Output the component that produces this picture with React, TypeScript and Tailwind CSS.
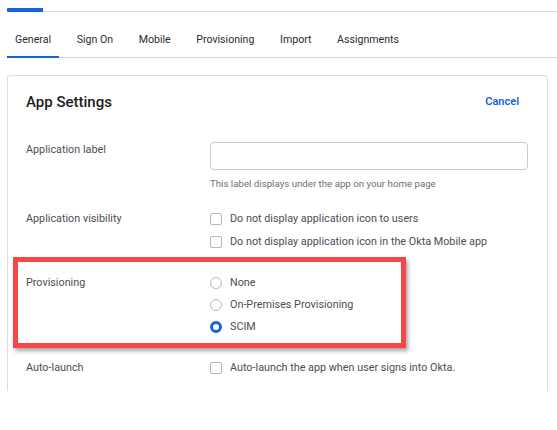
import { ReactNode } from 'react';

const tabs = ['General', 'Sign On', 'Mobile', 'Provisioning', 'Import', 'Assignments'];

function Checkbox() {
  return <span className="w-[12px] h-[12px] shrink-0 rounded-[2px] border border-[#b7b7be] bg-white" />;
}

function Radio({ checked }: { checked?: boolean }) {
  if (checked) {
    return <span className="w-[12px] h-[12px] shrink-0 rounded-full border-[3.5px] border-[#1662dd] bg-white" />;
  }
  return <span className="w-[12px] h-[12px] shrink-0 rounded-full border border-[#b7b7be] bg-white" />;
}

function Option({ control, children }: { control: ReactNode; children: ReactNode }) {
  return (
    <div className="flex items-center gap-[8px] h-[16px]">
      {control}
      <span>{children}</span>
    </div>
  );
}

function Row({ label, children, className }: { label: string; children: ReactNode; className?: string }) {
  return (
    <div className={`grid grid-cols-[184px_1fr] ${className ?? ''}`}>
      <div className="leading-[16px] text-[#4d4d55]">{label}</div>
      <div>{children}</div>
    </div>
  );
}

export default function App() {
  return (
    <div className="relative w-[557px] h-[430px] bg-white overflow-hidden text-[#1d1d21]" style={{ fontFamily: 'Roboto, "Noto Sans", sans-serif' }}>
      {/* top progress line */}
      <div className="flex items-end pt-[8px] pl-[7px]">
        <div className="w-[36px] h-[4px] bg-[#1662dd] rounded-l-[1px]" />
        <div className="flex-1 h-px bg-[#dcdce0]" />
      </div>

      {/* tabs */}
      <div className="flex gap-[9.6px] ml-[7px] mt-[20px] border-b border-[#d7d7dc] text-[10.6px] text-[#2b2b30]">
        {tabs.map((t, i) => (
          <div
            key={t}
            className={`px-[8px] pb-[8px] leading-[16px] -mb-px ${i === 0 ? 'border-b-2 border-[#1662dd]' : 'border-b-2 border-transparent'}`}
          >
            {t}
          </div>
        ))}
      </div>

      {/* card */}
      <div className="ml-[7px] mt-[17px] w-[541px] h-[316px] border border-b-0 border-[#dcdce0] rounded-t-[4px] pl-[18px] pr-[19px] pt-[16px] text-[10.8px]">
        <div className="flex items-center justify-between h-[20px]">
          <h2 className="text-[15px] font-medium text-[#1d1d21]">App Settings</h2>
          <button className="text-[11px] font-semibold text-[#1662dd] mr-[9px]">Cancel</button>
        </div>

        <Row label="Application label" className="mt-[30px]">
          <input className="w-full h-[28px] border border-[#c8c8ce] rounded-[4px] bg-white" />
          <p className="mt-[6px] leading-[16px] text-[9.7px] text-[#6e6e78]">This label displays under the app on your home page</p>
        </Row>

        <Row label="Application visibility" className="mt-[19px]">
          <div className="flex flex-col gap-[7px] text-[#4d4d55]">
            <Option control={<Checkbox />}>Do not display application icon to users</Option>
            <Option control={<Checkbox />}>Do not display application icon in the Okta Mobile app</Option>
          </div>
        </Row>

        <Row label="Provisioning" className="mt-[25px]">
          <div className="flex flex-col gap-[6px] text-[#4d4d55]">
            <Option control={<Radio />}>None</Option>
            <Option control={<Radio />}>On-Premises Provisioning</Option>
            <Option control={<Radio checked />}>SCIM</Option>
          </div>
        </Row>

        <Row label="Auto-launch" className="mt-[25px]">
          <div className="text-[#4d4d55]">
            <Option control={<Checkbox />}>Auto-launch the app when user signs into Okta.</Option>
          </div>
        </Row>
      </div>

      {/* annotation highlight */}
      <div className="absolute left-[13px] top-[257px] w-[393px] h-[91px] border-[5.5px] border-[#f64646] shadow-[2px_3px_4px_rgba(0,0,0,0.35)]" />
    </div>
  );
}
